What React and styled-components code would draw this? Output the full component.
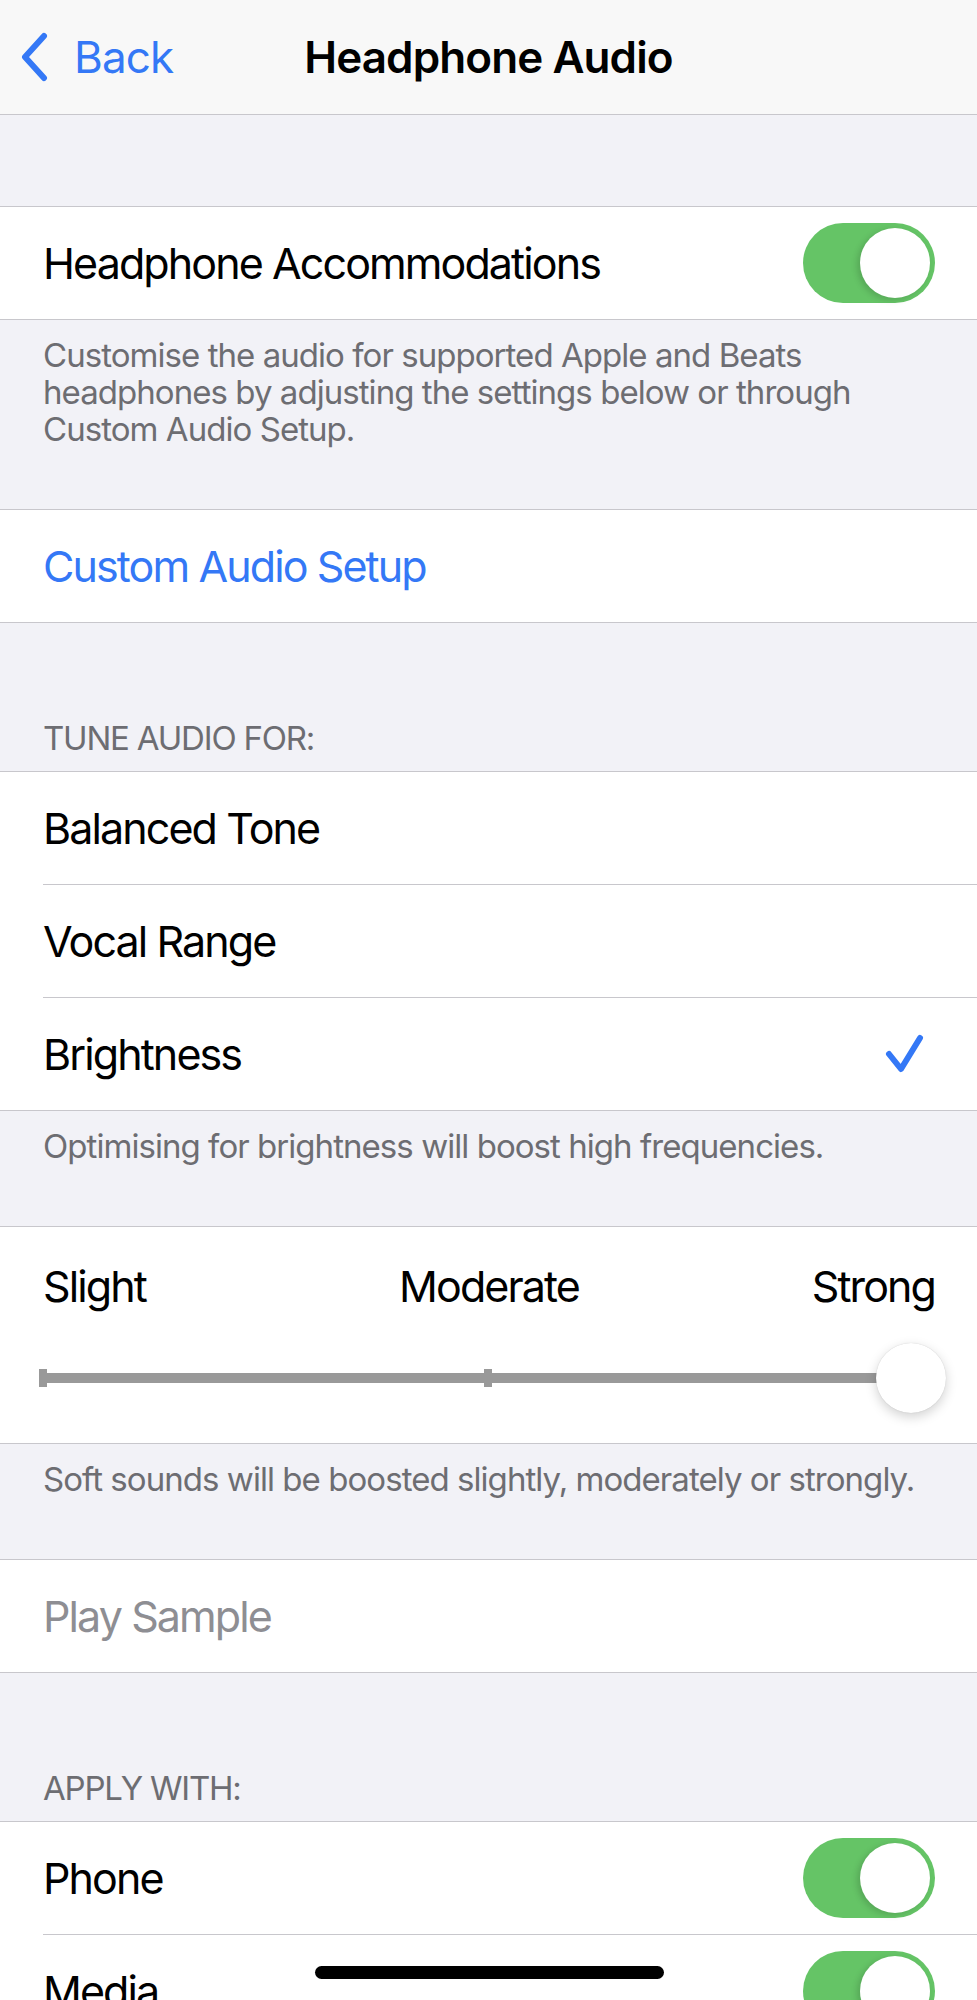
import styled, { createGlobalStyle } from "styled-components";

const GlobalStyle = createGlobalStyle`
  html, body {
    margin: 0;
    padding: 0;
    background: #f2f2f7;
  }
  body {
    font-family: Inter, "Noto Sans", "Liberation Sans", sans-serif;
    -webkit-font-smoothing: antialiased;
  }
`;

const Screen = styled.div`
  position: relative;
  width: 100%;
  height: 2000px;
  overflow: hidden;
  background: #f2f2f7;
  color: #000;
`;

const NavBar = styled.header`
  height: 114px;
  display: grid;
  grid-template-columns: 1fr auto 1fr;
  align-items: center;
  background: #f8f8f8;
  border-bottom: 1px solid #c8c7cc;
`;

const BackButton = styled.div`
  display: flex;
  align-items: center;
  gap: 25px;
  padding-left: 19px;
  color: #3478f6;
  font-size: 44px;
  letter-spacing: -0.9px;
`;

const Title = styled.h1`
  margin: 0;
  font-size: 44px;
  font-weight: 600;
  letter-spacing: -0.9px;
`;

const Gap = styled.div`
  height: ${(p) => p.$h}px;
`;

const SectionHeader = styled.div`
  padding: ${(p) => p.$top}px 43px 14px;
  font-size: 33px;
  line-height: 37px;
  color: #6d6d72;
  text-transform: uppercase;
  letter-spacing: -1.2px;
`;

const Group = styled.section`
  background: #fff;
  border-top: 1px solid #c8c7cc;
  border-bottom: 1px solid #c8c7cc;
`;

const Row = styled.div`
  padding-left: 43px;
`;

const RowInner = styled.div`
  height: 112px;
  display: flex;
  align-items: center;
  justify-content: space-between;
  padding-right: 42px;
  border-top: ${(p) => (p.$first ? "none" : "1px solid #c8c7cc")};
`;

const Label = styled.span`
  font-size: 43px;
  letter-spacing: -1.9px;
  color: ${(p) => p.$color || "#000"};
`;

const Footer = styled.p`
  margin: 0;
  padding: 17px 43px ${(p) => p.$bottom || 60}px;
  font-size: 33px;
  line-height: 37px;
  color: #6d6d72;
  letter-spacing: -0.95px;
`;

const ToggleTrack = styled.span`
  width: 132px;
  height: 80px;
  border-radius: 40px;
  background: #65c466;
  display: flex;
  align-items: center;
  justify-content: flex-end;
  padding: 0 5px;
  box-sizing: border-box;
  flex-shrink: 0;
`;

const ToggleKnob = styled.span`
  width: 70px;
  height: 70px;
  border-radius: 50%;
  background: #fff;
  box-shadow: -3px 2px 6px rgba(0, 0, 0, 0.15);
`;

const CheckMark = styled.svg`
  margin-right: 10px;
  flex-shrink: 0;
`;

const SliderBox = styled.div`
  height: 216px;
  padding: 0 42px 0 39px;
  display: flex;
  flex-direction: column;
`;

const SliderLabels = styled.div`
  display: grid;
  grid-template-columns: 1fr auto 1fr;
  align-items: center;
  padding: 33px 0 0 4px;
  font-size: 43px;
  letter-spacing: -1.9px;

  & > span:last-child {
    text-align: right;
  }
`;

const TrackArea = styled.div`
  position: relative;
  margin-top: 30px;
  height: 72px;
  display: flex;
  align-items: center;
`;

const TrackLine = styled.div`
  height: 10px;
  flex: 1;
  background: #999999;
  margin-right: 36px;
`;

const Tick = styled.span`
  position: absolute;
  top: 27px;
  width: 8px;
  height: 18px;
  background: #999999;
`;

const Thumb = styled.span`
  position: absolute;
  right: -11px;
  top: 1px;
  width: 70px;
  height: 70px;
  border-radius: 50%;
  background: #fff;
  box-shadow: 0 4px 12px rgba(0, 0, 0, 0.18), 0 0 1px rgba(0, 0, 0, 0.2);
`;

const HomeIndicator = styled.div`
  position: absolute;
  left: 315px;
  bottom: 21px;
  width: 349px;
  height: 13px;
  border-radius: 7px;
  background: #000;
`;

function Toggle() {
  return (
    <ToggleTrack>
      <ToggleKnob />
    </ToggleTrack>
  );
}

function Chevron() {
  return (
    <svg width="30" height="50" viewBox="0 0 30 50">
      <path
        d="M25 4 L6 25 L25 46"
        fill="none"
        stroke="#3478f6"
        strokeWidth="6"
        strokeLinecap="round"
        strokeLinejoin="round"
      />
    </svg>
  );
}

function Check() {
  return (
    <CheckMark width="40" height="40" viewBox="0 0 40 40">
      <path
        d="M4 20 L16 35 L35 4"
        fill="none"
        stroke="#3478f6"
        strokeWidth="6"
        strokeLinecap="round"
        strokeLinejoin="round"
      />
    </CheckMark>
  );
}

const tuneOptions = ["Balanced Tone", "Vocal Range", "Brightness"];

export default function App() {
  return (
    <Screen>
      <GlobalStyle />
      <NavBar>
        <BackButton>
          <Chevron />
          <span>Back</span>
        </BackButton>
        <Title>Headphone Audio</Title>
        <div />
      </NavBar>

      <Gap $h={91} />
      <Group>
        <Row>
          <RowInner $first>
            <Label>Headphone Accommodations</Label>
            <Toggle />
          </RowInner>
        </Row>
      </Group>
      <Footer $bottom={61}>
        Customise the audio for supported Apple and Beats headphones by
        adjusting the settings below or through Custom Audio Setup.
      </Footer>

      <Group>
        <Row>
          <RowInner $first>
            <Label $color="#3478f6">Custom Audio Setup</Label>
          </RowInner>
        </Row>
      </Group>

      <SectionHeader $top={97}>Tune Audio For:</SectionHeader>
      <Group>
        {tuneOptions.map((opt, i) => (
          <Row key={opt}>
            <RowInner $first={i === 0}>
              <Label>{opt}</Label>
              {opt === "Brightness" && <Check />}
            </RowInner>
          </Row>
        ))}
      </Group>
      <Footer $bottom={61}>
        Optimising for brightness will boost high frequencies.
      </Footer>

      <Group>
        <SliderBox>
          <SliderLabels>
            <span>Slight</span>
            <span>Moderate</span>
            <span>Strong</span>
          </SliderLabels>
          <TrackArea>
            <TrackLine />
            <Tick style={{ left: 0 }} />
            <Tick style={{ left: 445 }} />
            <Thumb />
          </TrackArea>
        </SliderBox>
      </Group>
      <Footer $bottom={61}>
        Soft sounds will be boosted slightly, moderately or strongly.
      </Footer>

      <Group>
        <Row>
          <RowInner $first>
            <Label $color="#8e8e93">Play Sample</Label>
          </RowInner>
        </Row>
      </Group>

      <SectionHeader $top={97}>Apply With:</SectionHeader>
      <Group>
        <Row>
          <RowInner $first>
            <Label>Phone</Label>
            <Toggle />
          </RowInner>
        </Row>
        <Row>
          <RowInner>
            <Label>Media</Label>
            <Toggle />
          </RowInner>
        </Row>
      </Group>

      <HomeIndicator />
    </Screen>
  );
}
